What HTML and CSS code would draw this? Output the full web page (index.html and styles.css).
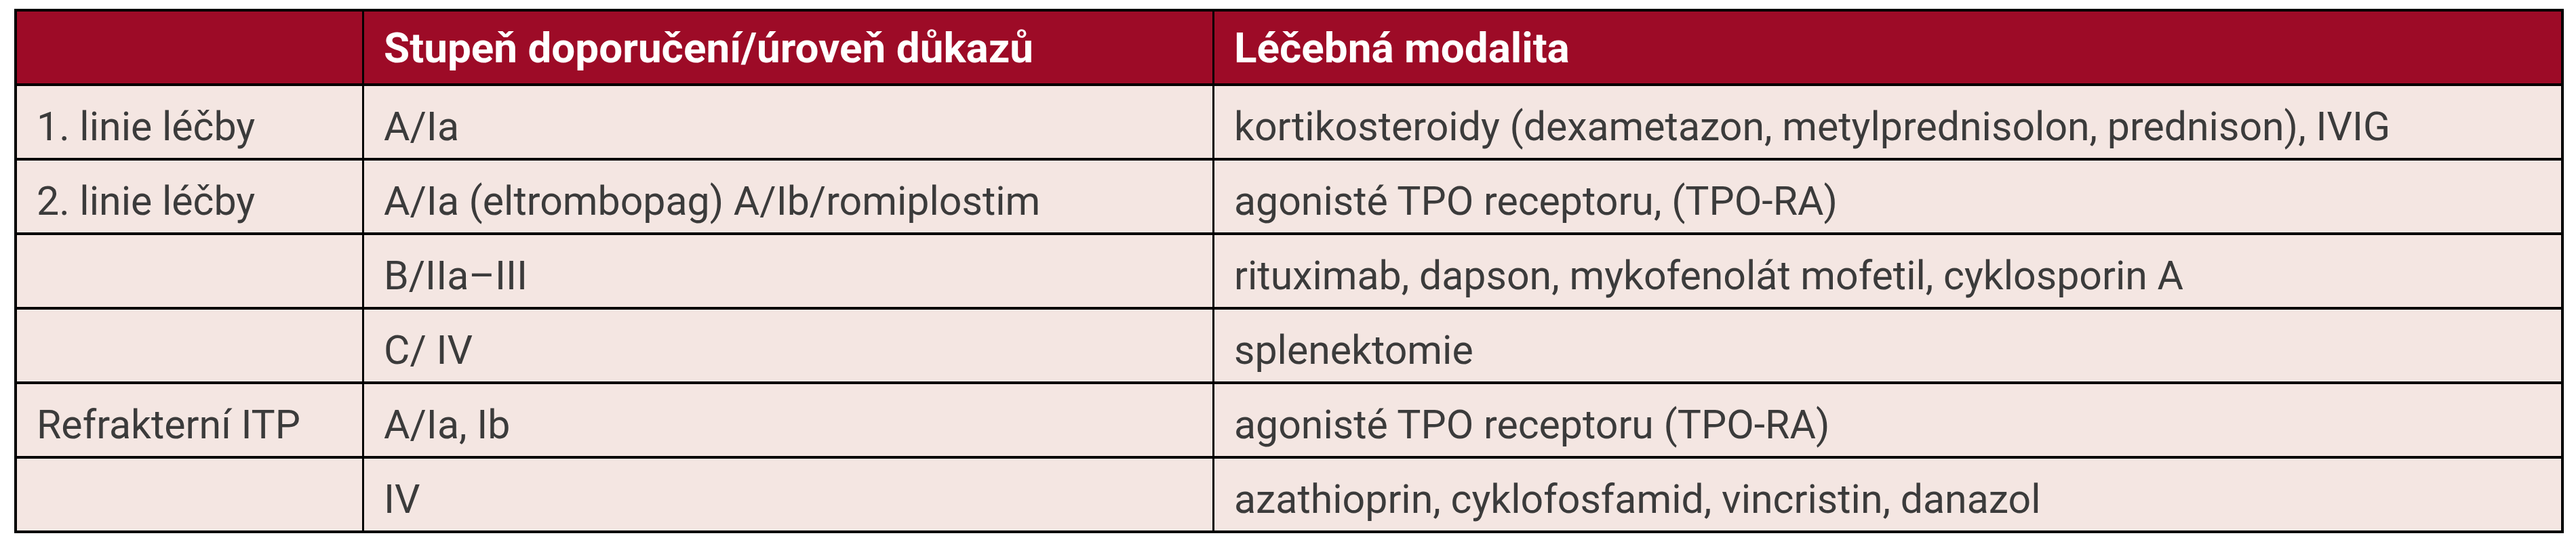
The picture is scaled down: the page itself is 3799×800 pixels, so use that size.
FILE: index.html
```html
<!DOCTYPE html>
<html lang="cs">
<head>
<meta charset="utf-8">
<title>Léčebné modality ITP</title>
<link rel="stylesheet" href="styles.css">
</head>
<body>
<div class="page">
  <div class="grid" role="table">
    <div class="cell head" role="columnheader"></div>
    <div class="cell head" role="columnheader">Stupeň doporučení/úroveň důkazů</div>
    <div class="cell head" role="columnheader">Léčebná modalita</div>

    <div class="cell" role="cell">1. linie léčby</div>
    <div class="cell" role="cell">A/Ia</div>
    <div class="cell" role="cell">kortikosteroidy (dexametazon, metylprednisolon, prednison), IVIG</div>

    <div class="cell" role="cell">2. linie léčby</div>
    <div class="cell" role="cell">A/Ia (eltrombopag) A/Ib/romiplostim</div>
    <div class="cell" role="cell">agonisté TPO receptoru, (TPO-RA)</div>

    <div class="cell" role="cell"></div>
    <div class="cell" role="cell">B/IIa–III</div>
    <div class="cell" role="cell">rituximab, dapson, mykofenolát mofetil, cyklosporin A</div>

    <div class="cell" role="cell"></div>
    <div class="cell" role="cell">C/ IV</div>
    <div class="cell" role="cell">splenektomie</div>

    <div class="cell" role="cell">Refrakterní ITP</div>
    <div class="cell" role="cell">A/Ia, Ib</div>
    <div class="cell" role="cell">agonisté TPO receptoru (TPO-RA)</div>

    <div class="cell" role="cell"></div>
    <div class="cell" role="cell">IV</div>
    <div class="cell" role="cell">azathioprin, cyklofosfamid, vincristin, danazol</div>
  </div>
</div>
</body>
</html>
```
FILE: styles.css
```css
html, body {
  margin: 0;
  padding: 0;
  background: #ffffff;
}

.page {
  padding: 13px 18px 0 21px;
}

.grid {
  display: grid;
  grid-template-columns: 509px 1251px 1fr;
  grid-auto-rows: 106px;
  column-gap: 3px;
  row-gap: 4px;
  padding: 4px;
  background: #000000;
  font-family: Roboto, "Liberation Sans", sans-serif;
}

.cell {
  display: flex;
  align-items: center;
  box-sizing: border-box;
  padding: 12px 29px 0 29px;
  background: #f4e6e2;
  color: #3b3b3b;
  font-size: 59px;
  font-weight: 400;
  white-space: nowrap;
}

.cell.head {
  padding-top: 0;
  background: #9d0b27;
  color: #ffffff;
  font-size: 62px;
  font-weight: 700;
}
```
